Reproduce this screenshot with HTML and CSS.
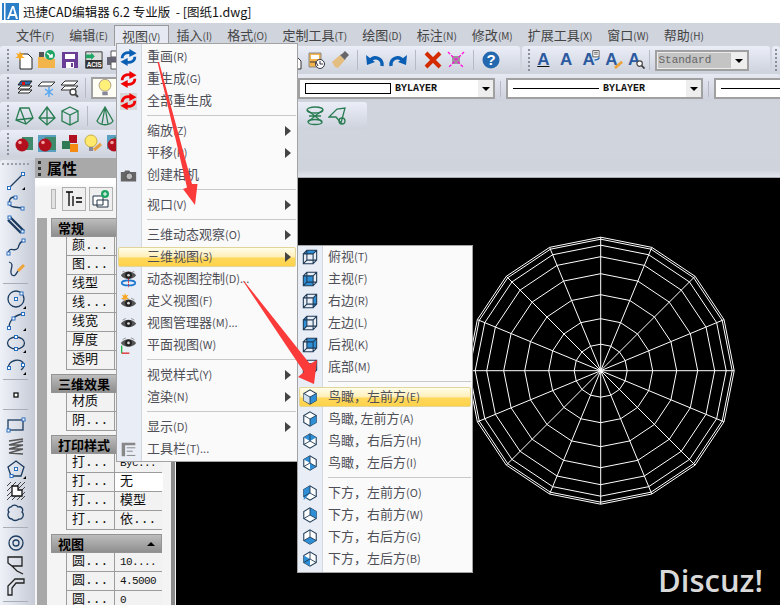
FILE: index.html
```html
<!DOCTYPE html>
<html lang="zh-CN">
<head>
<meta charset="utf-8">
<title>迅捷CAD编辑器</title>
<link rel="stylesheet" href="styles.css">
</head>
<body>
<svg class="defs" width="0" height="0">
  <defs>
    <polygon id="ring" class="ring" points="1,0 .9239,.3827 .7071,.7071 .3827,.9239 0,1 -.3827,.9239 -.7071,.7071 -.9239,.3827 -1,0 -.9239,-.3827 -.7071,-.7071 -.3827,-.9239 0,-1 .3827,-.9239 .7071,-.7071 .9239,-.3827"/>
    <symbol id="cycle" viewBox="0 0 20 20"><path fill="none" stroke="currentColor" stroke-width="3.2" d="M2.500 11C2.500 6 7 3.500 12 4.500M17.500 9C17.500 14 13 16.500 8 15.500"/><path fill="currentColor" d="M11 0 19.500 5 11 9.500ZM9 20 .5 15 9 10.500Z"/></symbol>
    <symbol id="eye" viewBox="0 0 20 14"><path fill="#555" d="M1 7C5 1 15 1 19 7 15 13 5 13 1 7Z"/><circle cx="10" cy="7" r="4" fill="#222"/><circle cx="10" cy="7" r="1.6" fill="#ddd"/><path fill="none" stroke="#888" d="M3 3 7 1M17 3l-4-2"/></symbol>
    <symbol id="cube" viewBox="0 0 18 18"><path fill="none" stroke="#1f3a55" stroke-width="1.2" d="M1.5 5.5h11v11h-11zM1.5 5.5l4-4h11v11l-4 4M12.5 5.5l4-4M5.5 1.5v11h11M1.5 16.5l4-4"/></symbol>
    <symbol id="hex" viewBox="0 0 18 18"><path fill="#fff" stroke="#1f3a55" stroke-width="1.2" d="M9 1l7 4v8l-7 4-7-4V5Z"/></symbol>
    <symbol id="arrow" viewBox="0 0 6 10"><path fill="#444" d="M0 0l6 5-6 5Z"/></symbol>
    <symbol id="dn" viewBox="0 0 8 4"><path fill="#000" d="M0 0h8L4 4Z"/></symbol>
    <symbol id="ball" viewBox="0 0 20 20"><rect x="8" y="3" width="11" height="13" fill="#3f8a6a"/><circle cx="8" cy="11" r="6.5" fill="#b3101e"/><circle cx="6" cy="8.5" r="1.8" fill="#f2a0a0"/></symbol>
  </defs>
</svg>

<header class="titlebar">
  <svg class="logo" width="17" height="17" viewBox="0 0 17 17"><rect width="17" height="17" fill="#2a7fc8"/><rect x="2" y="0" width="1.5" height="17" fill="#fff"/><path fill="#fff" d="M5 16 10 3h2l4 13h-2l-1-3H8l-1 3Zm4-5h3.5L11 5Z"/></svg>
  <span class="title-text">迅捷CAD编辑器 6.2 专业版&nbsp; - [图纸1.dwg]</span>
</header>

<nav class="menubar">
  <span class="mb-item">文件<small>(F)</small></span>
  <span class="mb-item">编辑<small>(E)</small></span>
  <span class="mb-item mb-open">视图<small>(V)</small></span>
  <span class="mb-item">插入<small>(I)</small></span>
  <span class="mb-item">格式<small>(O)</small></span>
  <span class="mb-item">定制工具<small>(T)</small></span>
  <span class="mb-item">绘图<small>(D)</small></span>
  <span class="mb-item">标注<small>(N)</small></span>
  <span class="mb-item">修改<small>(M)</small></span>
  <span class="mb-item">扩展工具<small>(X)</small></span>
  <span class="mb-item">窗口<small>(W)</small></span>
  <span class="mb-item">帮助<small>(H)</small></span>
</nav>

<section class="toolbars">
  <div class="tb-row">
    <div class="tb tb-a">
      <i class="grip"></i>
      <div class="icons">
        <svg class="ic" viewBox="0 0 20 20"><path fill="#fff" stroke="#222" d="M6 4h8l4 4v11H6Z"/><path fill="#f7a823" d="M6 1l1 3 3-1-2 3 3 2-4 0-1 3-1-3-4 0 3-2-2-3 3 1Z"/></svg>
        <svg class="ic" viewBox="0 0 20 20"><path fill="#f4b44c" d="M1 7h6l2 2h9v9H1Z"/><path fill="#555" d="M2 2h5v5H2Z"/><circle cx="13" cy="5" r="5" fill="#1fa565"/><path fill="none" stroke="#fff" stroke-width="1.6" d="M10 3l5 4m0-3v3h-3"/></svg>
        <svg class="ic" viewBox="0 0 20 20"><path fill="#6a3e96" d="M2 2h16v16H2Z"/><path fill="#fff" d="M5 4h10v5H5ZM6 12h8v6H6Z"/><path fill="#6a3e96" d="M11 13h2v4h-2Z"/></svg>
        <svg class="ic" viewBox="0 0 22 20"><path fill="#ddd" stroke="#333" d="M3 1h18v18H3Z"/><path fill="#333" d="M3 10h18v9H3Z"/><path fill="#1fa565" d="M3 4h6V2l4 4-4 4V8H3Z"/><text class="acis" x="4" y="18">ACIS</text></svg>
        <svg class="ic" viewBox="0 0 20 20"><path fill="#fff" stroke="#555" d="M5 1h10v6H5Z"/><path fill="#667" d="M1 7h18v8H1Z"/><path fill="#fff" stroke="#555" d="M5 12h10v7H5Z"/></svg>
      </div>
      <div class="icons icons-right">
        <svg class="ic" viewBox="0 0 20 20"><path fill="#f4b44c" d="M3 3h11v14H3Z"/><path fill="#fff" stroke="#333" d="M9 8h5l3 3v8H9Z"/></svg>
        <svg class="ic" viewBox="0 0 20 20"><path fill="#f4b44c" stroke="#888" d="M2 3h12v14H2Z"/><path fill="#fff" d="M4 5h8v4H4Z"/><circle cx="13" cy="14" r="4.5" fill="#fff" stroke="#334"/><path fill="none" stroke="#334" d="M3 12h6l2 4M13 11v3h3"/></svg>
        <svg class="ic" viewBox="0 0 20 20"><path fill="#e4bd80" d="M2 12l8-7 5 5-7 8-3-1Z"/><path fill="#666" d="M12 4l3-3 4 4-3 3-1 2-5-5Z"/></svg>
        <i class="vsep"></i>
        <svg class="ic" viewBox="0 0 20 20"><path fill="none" stroke="#0a5fb4" stroke-width="3.4" d="M17 16c1-8-8-11-12-5"/><path fill="#0a5fb4" d="M1 5l1 10 8-3Z"/></svg>
        <svg class="ic" viewBox="0 0 20 20"><path fill="none" stroke="#0a5fb4" stroke-width="3.4" d="M3 16c-1-8 8-11 12-5"/><path fill="#0a5fb4" d="M19 5l-1 10-8-3Z"/></svg>
        <i class="vsep"></i>
        <svg class="ic" viewBox="0 0 20 20"><path fill="none" stroke="#d42a00" stroke-width="4" d="M3 3l14 14M17 3 3 17"/></svg>
        <svg class="ic" viewBox="0 0 20 20"><path fill="#999" d="M6 6h8v8H6Z"/><path fill="none" stroke="#ff10e0" stroke-width="1.4" stroke-dasharray="3 1.5" d="M2 2l16 16M18 2 2 18"/></svg>
        <i class="vsep"></i>
        <svg class="ic" viewBox="0 0 20 20"><circle cx="10" cy="10" r="8.5" fill="#2468b0"/><text class="qm" x="10" y="15">?</text></svg>
      </div>
    </div>
    <div class="tb tb-b">
      <i class="grip"></i>
      <span class="aa aa-u">A</span>
      <span class="aa">A</span>
      <span class="aa">A<svg class="badge" viewBox="0 0 10 12"><path fill="#fff" stroke="#555" d="M2 .5h7v7H2Z"/><path stroke="#555" d="M3.500 2.500h4M3.500 4.500h4"/><path fill="none" stroke="#0a5fb4" stroke-width="1.4" d="M9 8c0 2-2 3-5 3"/></svg></span>
      <span class="aa">A<svg class="badge badge-low" viewBox="0 0 10 10"><path stroke="#eda33a" stroke-width="3" d="M1 9l8-7"/></svg></span>
      <span class="aa">A<svg class="badge badge-low" viewBox="0 0 10 10"><circle cx="4" cy="4" r="3" fill="#fff" stroke="#444" stroke-width="1.3"/><path stroke="#444" stroke-width="2" d="M6 6l3.500 3.500"/></svg></span>
      <i class="vsep"></i>
      <div class="combo combo-std"><span class="std-text">Standard</span><span class="combo-btn"><svg width="8" height="4"><use href="#dn"/></svg></span></div>
    </div>
    <div class="tb tb-c"><i class="grip"></i></div>
  </div>

  <div class="tb-row">
    <div class="tb tb-wide">
      <i class="grip"></i>
      <div class="icons">
        <svg class="ic" viewBox="0 0 20 20"><path fill="#fff" stroke="#222" d="M4 15l3-3h11l-3 3ZM4 11l3-3h11l-3 3Z"/><path fill="#2c6cb0" stroke="#222" d="M4 7l3-4h11l-3 4Z"/><rect x="8" y="4" width="3" height="3" fill="#e01010"/></svg>
        <svg class="ic" viewBox="0 0 20 20"><path fill="#fff" stroke="#333" d="M1 8l4-4h13l-4 4Z"/><path fill="none" stroke="#5aa8ef" stroke-width="1.5" d="M12 9v10M8 11l8 6M16 11l-8 6"/></svg>
        <svg class="ic" viewBox="0 0 20 20"><path fill="#fff" stroke="#333" d="M1 7l4-4h13l-4 4ZM1 12l4-4h13l-4 4Z"/><circle cx="13" cy="14" r="3" fill="#fff" stroke="#444" stroke-width="1.4"/><path stroke="#444" stroke-width="2" d="M15 16l3 3"/></svg>
        <i class="vsep vsep-tight"></i>
        <div class="combo combo-layer"><svg class="ic" viewBox="0 0 20 22"><circle cx="10" cy="8" r="6.5" fill="#fff07a" stroke="#a98"/><path fill="#889" d="M7 15h6v4H7Z"/></svg></div>
      </div>
      <div class="combos">
        <div class="combo combo-line"><span class="swatch"></span><span class="bylayer">BYLAYER</span><span class="combo-btn"><svg width="8" height="4"><use href="#dn"/></svg></span></div>
        <i class="vsep"></i>
        <div class="combo combo-line"><span class="lineprev"></span><span class="bylayer">BYLAYER</span><span class="combo-btn"><svg width="8" height="4"><use href="#dn"/></svg></span></div>
        <i class="vsep"></i>
        <div class="combo combo-line combo-last"><span class="lineprev"></span></div>
      </div>
    </div>
  </div>

  <div class="tb-row">
    <div class="tb tb-3">
      <i class="grip"></i>
      <div class="icons green">
        <svg class="ic" viewBox="0 0 20 20"><path d="M6 2h9l4 10-7 6-10-4ZM6 2l6 16M2 14 19 12"/></svg>
        <svg class="ic" viewBox="0 0 20 20"><path d="M10 1l8 11-8 7-8-7ZM10 1v18M2 12h16"/></svg>
        <svg class="ic" viewBox="0 0 20 20"><path d="M10 1l8 4v10l-8 4-8-4V5ZM2 5l8 4 8-4M10 9v10"/></svg>
        <i class="vsep"></i>
        <svg class="ic" viewBox="0 0 20 20"><path d="M10 1 2 15c3 5 13 5 16 0ZM10 1 7 18M10 1l3 17"/></svg>
      </div>
      <div class="icons icons-right green">
        <i class="vsep"></i>
        <svg class="ic" viewBox="0 0 20 20"><ellipse cx="10" cy="4" rx="8" ry="3"/><ellipse cx="10" cy="16" rx="7" ry="2.5"/><path d="M2 4l8 6 8-6M3 16l7-6 7 6M4 10h12"/></svg>
        <svg class="ic" viewBox="0 0 20 20"><path d="M1 11 9 3l8-1-4 15-5-6Zm0 0h7"/><circle cx="14" cy="15" r="3"/></svg>
      </div>
    </div>
  </div>

  <div class="tb-row">
    <div class="tb tb-4">
      <i class="grip"></i>
      <div class="icons">
        <svg class="ic"><use href="#ball"/></svg>
        <svg class="ic" viewBox="0 0 20 20"><rect x="1" y="1" width="18" height="17" fill="#5aa0c0"/><use href="#ball" width="20" height="20"/></svg>
        <svg class="ic" viewBox="0 0 20 20"><rect x="9" y="1" width="8" height="8" fill="#b01020"/><rect x="2" y="7" width="8" height="8" fill="#2f7a55"/><rect x="10" y="10" width="8" height="8" fill="#f58a10"/></svg>
        <svg class="ic" viewBox="0 0 20 20"><circle cx="8" cy="7" r="6" fill="#ffe86a" stroke="#c9b040"/><path fill="#889" d="M6 13h4v4H6Z"/><path stroke="#e8a040" stroke-width="3" d="M11 16l7-6"/></svg>
        <svg class="ic" viewBox="0 0 20 20"><rect x="1" y="1" width="14" height="14" fill="#5aa0c0"/><use href="#ball" width="20" height="20"/></svg>
      </div>
    </div>
  </div>
</section>

<main class="workspace">
  <aside class="vtools">
    <i class="hgrip"></i>
    <svg class="vic" viewBox="0 0 20 20"><path d="M3 17 17 3"/><rect class="n" x="1.5" y="15.5" width="3" height="3"/><rect class="n" x="15.5" y="1.5" width="3" height="3"/><path class="t" d="M19 16v3h-3Z"/></svg>
    <svg class="vic" viewBox="0 0 20 20"><path d="M9 4C2 4 1 13 8 14l8 1"/><rect class="n" x="8" y="3" width="3" height="3"/><rect class="n" x="2" y="9" width="3" height="3"/><rect class="n" x="15" y="14" width="3" height="3"/></svg>
    <svg class="vic" viewBox="0 0 20 20"><path class="thick" d="M4 2 18 16M2 5 15 18"/><rect class="n" x="2" y="1" width="3" height="3"/><rect class="n" x="15" y="15" width="3" height="3"/></svg>
    <svg class="vic" viewBox="0 0 20 20"><path d="M2 17C3 8 9 16 12 11 13 7 15 4 18 4"/><rect class="n" x="1" y="15" width="3" height="3"/><rect class="n" x="16" y="2" width="3" height="3"/></svg>
    <svg class="vic" viewBox="0 0 20 20"><path d="M3 3C10 5 2 12 6 16 10 19 11 11 14 10"/><path class="pen" d="M12 12l6-6"/></svg>
    <i class="hsep"></i>
    <svg class="vic" viewBox="0 0 20 20"><circle cx="10" cy="10" r="8"/><rect class="n" x="8.5" y="8.5" width="3" height="3"/><rect class="n" x="14" y="3" width="3" height="3"/><path class="t" d="M20 17v3h-3Z"/></svg>
    <svg class="vic" viewBox="0 0 20 20"><path d="M3 17C3 9 9 4 17 3"/><rect class="n" x="1.5" y="15.5" width="3" height="3"/><rect class="n" x="15.5" y="1.5" width="3" height="3"/><rect class="n" x="6" y="6" width="3" height="3"/><path class="t" d="M20 17v3h-3Z"/></svg>
    <svg class="vic" viewBox="0 0 20 20"><ellipse cx="10" cy="10" rx="8.5" ry="6"/><rect class="n" x="8.5" y="2.5" width="3" height="3"/><rect class="n" x="8.5" y="14.5" width="3" height="3"/><path class="t" d="M20 17v3h-3Z"/></svg>
    <svg class="vic" viewBox="0 0 20 20"><path d="M3 13C0 6 16 1 18 10c0 3-2 4-3 5"/><rect class="n" x="1.5" y="11.5" width="3" height="3"/><rect class="n" x="15.5" y="8.5" width="3" height="3"/><path class="t" d="M20 17v3h-3Z"/></svg>
    <i class="hsep"></i>
    <svg class="vic" viewBox="0 0 20 20"><rect class="pt" x="8" y="8" width="4" height="4"/></svg>
    <i class="hsep"></i>
    <svg class="vic" viewBox="0 0 20 20"><rect x="2" y="5" width="15" height="10"/><rect class="n" x="16" y="3" width="3" height="3"/><rect class="n" x="1" y="14" width="3" height="3"/></svg>
    <svg class="vic" viewBox="0 0 20 20"><path class="coil" d="M3 4 17 2M3 8 17 4M3 8 17 8M3 12 17 8M3 12 17 12M3 16 17 12M3 16 17 17"/></svg>
    <svg class="vic" viewBox="0 0 20 20"><path d="M10 2 18 8 15 17H5L2 8Z"/><rect class="n" x="8.5" y="8.5" width="3" height="3"/><rect class="n" x="4" y="15.5" width="3" height="3"/><path class="t" d="M20 17v3h-3Z"/></svg>
    <svg class="vic" viewBox="0 0 20 20"><path class="hatch" d="M1 5 5 1M1 10 10 1M1 15 15 1M1 19 19 1M6 19 19 6M11 19 19 11M15 19 19 15"/><path class="plate" d="M6 5h6v4h4v6H6Z"/></svg>
    <svg class="vic" viewBox="0 0 20 20"><path d="M5 4C7 1 11 2 12 4 15 3 18 6 16 9 19 12 16 17 13 16 11 18 7 18 6 16 2 16 1 11 3 9 1 7 3 4 5 4Z"/></svg>
    <i class="hsep"></i>
    <svg class="vic" viewBox="0 0 20 20"><circle cx="10" cy="10" r="7"/><circle cx="10" cy="10" r="3"/></svg>
    <svg class="vic" viewBox="0 0 20 20"><path class="dk" d="M2 2h14v9H6L2 8ZM6 11l5 5 6 3"/></svg>
    <svg class="vic" viewBox="0 0 20 20"><path class="dk" d="M18 2H9L2 9v9h4v-7l4-5h8Z"/></svg>
    <i class="hsep"></i>
  </aside>

  <aside class="panel">
    <div class="panel-head"><i class="vgrip"></i><span class="panel-title">属性</span></div>
    <div class="panel-body">
      <div class="panel-tools">
        <i class="ptool-grip"></i>
        <span class="ptool"><svg width="18" height="18" viewBox="0 0 18 18"><path fill="none" stroke="#000" stroke-width="1.3" d="M1 2h7M4 2v14M8 6v10M11 8h6M11 12h6"/></svg></span>
        <span class="ptool"><svg width="18" height="18" viewBox="0 0 18 18"><path fill="#fff" stroke="#234" d="M1 6h10v9H1ZM5 10h11v7H5Z"/><circle cx="13" cy="4" r="4" fill="#1fa565"/><path stroke="#fff" d="M11 4h4M13 2v4"/></svg></span>
        <span class="ptool"></span>
      </div>
      <div class="tree">
        <i class="strip"></i>
        <div class="groups">
          <section class="group">
            <h3 class="group-head">常规</h3>
            <div class="prop"><span>颜...</span><span></span></div>
            <div class="prop"><span>图...</span><span></span></div>
            <div class="prop"><span>线型</span><span></span></div>
            <div class="prop"><span>线...</span><span></span></div>
            <div class="prop"><span>线宽</span><span></span></div>
            <div class="prop"><span>厚度</span><span></span></div>
            <div class="prop"><span>透明</span><span></span></div>
          </section>
          <section class="group">
            <h3 class="group-head">三维效果</h3>
            <div class="prop"><span>材质</span><span></span></div>
            <div class="prop"><span>阴...</span><span></span></div>
          </section>
          <section class="group">
            <h3 class="group-head">打印样式</h3>
            <div class="prop"><span>打...</span><span class="num">Byc...</span></div>
            <div class="prop"><span>打...</span><span class="white">无</span></div>
            <div class="prop"><span>打...</span><span>模型</span></div>
            <div class="prop"><span>打...</span><span>依...</span></div>
          </section>
          <section class="group">
            <h3 class="group-head">视图<svg class="up" width="8" height="4" viewBox="0 0 8 4"><path d="M0 4h8L4 0Z"/></svg></h3>
            <div class="prop"><span>圆...</span><span class="num">10....</span></div>
            <div class="prop"><span>圆...</span><span class="num">4.5000</span></div>
            <div class="prop"><span>圆...</span><span class="num">0</span></div>
          </section>
        </div>
        <i class="pgap"></i>
        <i class="scroll"></i>
      </div>
    </div>
  </aside>

  <div class="drawing">
    <div class="drawing-top"></div>
    <svg class="canvas" width="604" height="427" viewBox="176 178 604 427">
      <g transform="translate(600.7 370.7)">
        <use href="#ring" transform="scale(26.5)"/>
        <use href="#ring" transform="scale(52)"/>
        <use href="#ring" transform="scale(76)"/>
        <use href="#ring" transform="scale(97)"/>
        <use href="#ring" transform="scale(114)"/>
        <use href="#ring" transform="scale(125.5)"/>
        <use href="#ring" transform="scale(131.5)"/>
        <use href="#ring" transform="scale(133.5)"/>
        <path class="spokes" d="M-133.5 0H133.5M0-133.5V133.5M-123.3-51.1 123.3 51.1M-123.3 51.1 123.3-51.1M-94.4-94.4 94.4 94.4M-94.4 94.4 94.4-94.4M-51.1-123.3 51.1 123.3M-51.1 123.3 51.1-123.3"/>
      </g>
    </svg>
  </div>
</main>

<div class="menu menu-main">
  <div class="mi"><svg class="mic blue"><use href="#cycle"/></svg><span class="ml">重画<small>(R)</small></span></div>
  <div class="mi"><svg class="mic red"><use href="#cycle"/></svg><span class="ml">重生成<small>(G)</small></span></div>
  <div class="mi"><svg class="mic red boxed"><use href="#cycle"/></svg><span class="ml">全部重生成</span></div>
  <i class="ms"></i>
  <div class="mi"><i class="mic"></i><span class="ml">缩放<small>(Z)</small></span><svg class="sub"><use href="#arrow"/></svg></div>
  <div class="mi"><i class="mic"></i><span class="ml">平移<small>(P)</small></span><svg class="sub"><use href="#arrow"/></svg></div>
  <div class="mi"><svg class="mic" viewBox="0 0 20 20"><path fill="#666" d="M1 6h4l1-2h5l1 2h7v11H1Z"/><circle cx="11" cy="11" r="4" fill="#bbb" stroke="#444"/></svg><span class="ml">创建相机</span></div>
  <i class="ms"></i>
  <div class="mi"><i class="mic"></i><span class="ml">视口<small>(V)</small></span><svg class="sub"><use href="#arrow"/></svg></div>
  <i class="ms"></i>
  <div class="mi"><i class="mic"></i><span class="ml">三维动态观察<small>(O)</small></span><svg class="sub"><use href="#arrow"/></svg></div>
  <div class="mi hl"><i class="mic"></i><span class="ml">三维视图<small>(3)</small></span><svg class="sub"><use href="#arrow"/></svg></div>
  <div class="mi"><svg class="mic" viewBox="0 0 20 20"><use href="#eye" y="-2" height="14" width="20"/><ellipse cx="10" cy="14" rx="8" ry="3" fill="none" stroke="#1f78d0" stroke-width="2"/><path stroke="#e01010" stroke-dasharray="2 1" d="M10 9v10"/></svg><span class="ml">动态视图控制<small>(D)...</small></span></div>
  <div class="mi"><svg class="mic" viewBox="0 0 20 20"><use href="#eye" y="5" height="14" width="20"/><path fill="#f7a823" d="M6 0l1 3 3-1-2 3 3 2-4 0-1 3-1-3-4 0 3-2-2-3 3 1Z"/></svg><span class="ml">定义视图<small>(F)</small></span></div>
  <div class="mi"><svg class="mic" viewBox="0 0 20 20"><use href="#eye" y="3" height="14" width="20"/></svg><span class="ml">视图管理器<small>(M)...</small></span></div>
  <div class="mi"><svg class="mic" viewBox="0 0 20 20"><use href="#eye" y="0" height="14" width="20"/><path fill="none" stroke="#10b030" stroke-width="1.4" d="M2 10v9"/><path fill="none" stroke="#e01010" stroke-width="1.4" d="M2 19h9"/></svg><span class="ml">平面视图<small>(W)</small></span></div>
  <i class="ms"></i>
  <div class="mi"><i class="mic"></i><span class="ml">视觉样式<small>(Y)</small></span><svg class="sub"><use href="#arrow"/></svg></div>
  <div class="mi"><i class="mic"></i><span class="ml">渲染<small>(N)</small></span><svg class="sub"><use href="#arrow"/></svg></div>
  <i class="ms"></i>
  <div class="mi"><i class="mic"></i><span class="ml">显示<small>(D)</small></span><svg class="sub"><use href="#arrow"/></svg></div>
  <div class="mi"><svg class="mic" viewBox="0 0 20 20"><path fill="#888" d="M2 2h16v3H2ZM2 5h4v13H2Z"/><path fill="none" stroke="#777" d="M8 8h10M8 12h7M8 17h10"/></svg><span class="ml">工具栏<small>(T)...</small></span></div>
</div>

<div class="menu menu-sub">
  <div class="mi"><svg class="mic" viewBox="0 0 18 18"><path fill="#2f8fd6" d="M1.5 5.5l4-4h11l-4 4Z"/><use href="#cube"/></svg><span class="ml">俯视<small>(T)</small></span></div>
  <div class="mi"><svg class="mic" viewBox="0 0 18 18"><path fill="#2f8fd6" d="M1.5 5.5h11v11h-11Z"/><use href="#cube"/></svg><span class="ml">主视<small>(F)</small></span></div>
  <div class="mi"><svg class="mic" viewBox="0 0 18 18"><path fill="#2f8fd6" d="M12.5 5.5l4-4v11l-4 4Z"/><use href="#cube"/></svg><span class="ml">右边<small>(R)</small></span></div>
  <div class="mi"><svg class="mic" viewBox="0 0 18 18"><path fill="#2f8fd6" d="M1.5 5.5l4-4v11l-4 4Z"/><use href="#cube"/></svg><span class="ml">左边<small>(L)</small></span></div>
  <div class="mi"><svg class="mic" viewBox="0 0 18 18"><path fill="#2f8fd6" d="M5.5 1.5h11v11h-11Z"/><use href="#cube"/></svg><span class="ml">后视<small>(K)</small></span></div>
  <div class="mi"><svg class="mic" viewBox="0 0 18 18"><path fill="#2f8fd6" d="M1.5 16.5l4-4h11l-4 4Z"/><use href="#cube"/></svg><span class="ml">底部<small>(M)</small></span></div>
  <i class="ms"></i>
  <div class="mi hl"><svg class="mic" viewBox="0 0 18 18"><use href="#hex"/><path fill="#2f8fd6" d="M9 9l7-4v8l-7 4Z"/><path fill="#cfe0ee" d="M2 5l7 4v8l-7-4Z"/><path fill="none" stroke="#1f3a55" d="M2 5l7 4 7-4M9 9v8"/></svg><span class="ml">鸟瞰，左前方<small>(E)</small></span></div>
  <div class="mi"><svg class="mic" viewBox="0 0 18 18"><use href="#hex"/><path fill="#2f8fd6" d="M9 9l7-4v8l-7 4Z"/><path fill="none" stroke="#1f3a55" d="M2 5l7 4 7-4M9 9v8"/></svg><span class="ml">鸟瞰, 左前方<small>(A)</small></span></div>
  <div class="mi"><svg class="mic" viewBox="0 0 18 18"><use href="#hex"/><path fill="#2f8fd6" d="M9 9l7-4-7-4-7 4Z"/><path fill="none" stroke="#1f3a55" d="M2 13l7-4 7 4M9 1v8"/></svg><span class="ml">鸟瞰，右后方<small>(H)</small></span></div>
  <div class="mi"><svg class="mic" viewBox="0 0 18 18"><use href="#hex"/><path fill="#2f8fd6" d="M9 9 2 5l7-4Z"/><path fill="#2f8fd6" d="M9 9l7 4-7 4Z"/><path fill="none" stroke="#1f3a55" d="M2 13l7-4 7 4M9 1v8"/></svg><span class="ml">鸟瞰，左后方<small>(I)</small></span></div>
  <i class="ms"></i>
  <div class="mi"><svg class="mic" viewBox="0 0 18 18"><use href="#hex"/><path fill="#2f8fd6" d="M2 5l7-4v8l-7 8Z"/><path fill="none" stroke="#1f3a55" d="M9 1v8l7 4M9 9l-7 4"/></svg><span class="ml">下方，左前方<small>(O)</small></span></div>
  <div class="mi"><svg class="mic" viewBox="0 0 18 18"><use href="#hex"/><path fill="#2f8fd6" d="M9 1l7 4v8l-7-4Z"/><path fill="none" stroke="#1f3a55" d="M9 1v8l7 4M9 9l-7 4"/></svg><span class="ml">下方，右前方<small>(W)</small></span></div>
  <div class="mi"><svg class="mic" viewBox="0 0 18 18"><use href="#hex"/><path fill="#2f8fd6" d="M9 9l7 4-7 4-7-4Z"/><path fill="none" stroke="#1f3a55" d="M9 1v8l7 4M9 9l-7 4"/></svg><span class="ml">下方，右后方<small>(G)</small></span></div>
  <div class="mi"><svg class="mic" viewBox="0 0 18 18"><use href="#hex"/><path fill="#2f8fd6" d="M2 5l7 4v8l-7-4Z"/><path fill="none" stroke="#1f3a55" d="M9 1v8l7 4M9 9l-7 4"/></svg><span class="ml">下方，左后方<small>(B)</small></span></div>
</div>

<svg class="arrows" width="780" height="605" viewBox="0 0 780 605">
  <path d="M157.5 62 159 62 192 184 197.500 184 195 205 183 189 187 187.500Z"/>
  <path d="M243 281 244 281 310 364 317 360 314 384 298 377 304 372Z"/>
</svg>

<div class="watermark">Discuz!</div>
</body>
</html>
```

FILE: styles.css
```css
* { box-sizing: border-box; }
html, body { margin: 0; padding: 0; }
body {
  position: relative;
  width: 780px;
  height: 605px;
  overflow: hidden;
  background: #d0d4dd;
  font-family: "Noto Sans CJK SC", "Liberation Sans", sans-serif;
  color: #222;
}
i { display: block; }
.defs { position: absolute; }
.ring { fill: none; stroke: #fff; stroke-width: 1; vector-effect: non-scaling-stroke; }
.spokes { fill: none; stroke: #fff; stroke-width: 1; }

/* title bar */
.titlebar {
  height: 23px;
  background: #fff;
  display: flex;
  align-items: center;
  padding-left: 2px;
  gap: 4px;
}
.logo { flex: none; }
.title-text { font-size: 12.5px; line-height: 23px; color: #111; white-space: nowrap; }

/* menu bar */
.menubar {
  height: 23px;
  display: flex;
  align-items: center;
  padding-left: 8px;
  background: #d0d4dd;
  font-size: 13px;
  color: #444;
}
.mb-item {
  padding: 0 7px;
  white-space: nowrap;
  height: 21px;
  line-height: 19px;
  border: 1px solid transparent;
  border-bottom: 0;
  margin-right: -1px;
}
.mb-item small { font-size: 10px; }
.mb-open { background: #e6e9f1; border-color: #9a9a9a; margin: 1px 0 0 -1px; }

/* toolbars */
.toolbars { height: 112px; }
.tb-row { display: flex; height: 28px; gap: 2px; }
.tb {
  display: flex;
  align-items: center;
  height: 27px;
  border-radius: 3px;
  background: linear-gradient(#ebeef7, #cdd2dd);
  padding-left: 7px;
}
.tb-a { width: 520px; }
.tb-b { width: 248px; padding-left: 6px; }
.tb-c { flex: 1; min-width: 0; padding-left: 3px; }
.tb-wide { width: 780px; background: linear-gradient(#e6e9f2, #cdd1dc); }
.tb-3 { width: 367px; }
.tb-4 { width: 220px; }
.grip { width: 2px; height: 22px; flex: none; border-left: 2px dotted #8b8f99; }
.icons { display: flex; align-items: center; gap: 3px; padding-left: 5px; }
.icons-right { margin-left: auto; padding-left: 0; padding-right: 19px; }
.ic { width: 20px; height: 20px; flex: none; display: block; }
.vsep { width: 1px; height: 20px; background: #b6bac4; margin: 0 4px; flex: none; }
.vsep-tight { margin: 0 2px; }
.acis { font: bold 7px "Liberation Sans", sans-serif; fill: #fff; }
.qm { font: bold 15px "Liberation Sans", sans-serif; fill: #fff; text-anchor: middle; }
.green .ic { fill: none; stroke: #2a7d52; stroke-width: 1.3; }
.aa {
  position: relative;
  width: 22.7px;
  text-align: center;
  font: bold 17px/24px "Liberation Sans", sans-serif;
  color: #2c5aa0;
  flex: none;
}
.tb-b .aa:first-of-type { margin-left: 2px; }
.aa-u { text-decoration: underline; text-decoration-color: #111; }
.badge { position: absolute; right: 0; top: 2px; width: 9px; height: 11px; }
.badge-low { top: 12px; height: 9px; }
.combo {
  display: flex;
  align-items: center;
  border: 2px solid #a0a0a0;
  background: #fff;
  height: 21px;
  flex: none;
  margin-top: 2px;
}
.combo-std { width: 94px; background: #ececec; padding: 1px; margin-left: 1px; }
.std-text {
  flex: 1;
  height: 15px;
  background: #c4c4c4;
  font: 11px/15px "Liberation Mono", monospace;
  color: #666;
}
.combo-btn { width: 15px; display: flex; align-items: center; justify-content: center; align-self: stretch; background: #eeeeee; margin-left: auto; }
.combo-layer { width: 130px; height: 22px; padding: 0 2px; background: #fffef4; margin-top: 0; }
.combos { display: flex; align-items: center; margin-left: auto; }
.combo-line { width: 197px; padding-left: 5px; }
.combo-last { width: 66px; border-right: 0; padding-left: 5px; }
.combo-last .lineprev { flex: 1; width: auto; }
.combos .vsep { margin: 2px 5px 0; height: 16px; }
.swatch { width: 86px; height: 11px; border: 1px solid #000; flex: none; }
.lineprev { width: 86px; height: 1px; background: #000; flex: none; }
.bylayer { font: bold 10px "Liberation Mono", monospace; color: #111; padding-left: 4px; }

/* workspace */
.workspace { display: flex; height: 447px; }
.vtools {
  width: 35px;
  flex: none;
  margin-top: 2px;
  padding-right: 4px;
  display: flex;
  flex-direction: column;
  align-items: center;
  overflow: hidden;
  background: linear-gradient(90deg, #eef1f8, #c6cbd6);
  border-radius: 3px 0 0 0;
}
.hgrip { width: 27px; height: 7px; border-top: 2px dotted #9a9ea8; margin-top: 3px; flex: none; }
.vic { width: 22px; height: 22px; flex: none; padding: 1px; fill: none; stroke: #1c3b5e; stroke-width: 1.3; display: block; }
.vic .n { fill: #fff; stroke: #2a6fc0; stroke-width: 1; }
.vic .t { fill: #000; stroke: none; }
.vic .thick { stroke-width: 2.4; }
.vic .pen { stroke: #eda33a; stroke-width: 3; }
.vic .pt { fill: #fff; stroke: #111; }
.vic .coil { stroke: #555; stroke-width: 1.6; }
.vic .hatch { stroke: #444; stroke-width: 1; }
.vic .plate { fill: #fff; stroke: #111; }
.vic .dk { stroke: #222; }
.hsep { width: 25px; height: 8px; flex: none; }
.hsep::after { content: ""; display: block; margin-top: 3px; height: 1px; background: #a9adb6; }

/* properties panel */
.panel { width: 141px; flex: none; display: flex; flex-direction: column; }
.panel-head {
  height: 20px;
  flex: none;
  display: flex;
  align-items: center;
  padding-left: 3px;
  background: #a9a9a9;
}
.vgrip { width: 3px; height: 15px; border-left: 3px dotted #333; flex: none; }
.panel-title { font-size: 15px; font-weight: 700; color: #000; padding-left: 6px; line-height: 20px; }
.panel-body { flex: 1; background: linear-gradient(#fff 6px, #f4f4f4 10px); min-height: 0; overflow: hidden; }
.panel-tools { display: flex; gap: 3px; padding: 9px 0 0 16px; height: 40px; }
.ptool-grip { width: 5px; height: 20px; margin: 2px 3px 0 0; background: #e2e2e2; border: 1px solid #b5b5b5; }
.ptool { width: 24px; height: 24px; background: #efefef; border: 1px solid #b0b0b0; display: flex; align-items: center; justify-content: center; flex: none; }
.tree { display: flex; height: 387px; overflow: hidden; }
.strip { width: 10px; margin-left: 2px; margin-right: 4px; background: #a8a8a8; flex: none; }
.groups { width: 111px; flex: none; display: flex; flex-direction: column; gap: 4px; }
.group { display: block; }
.group-head {
  margin: 0;
  height: 19px;
  padding: 0 6px;
  display: flex;
  align-items: center;
  justify-content: space-between;
  font-size: 13px;
  line-height: 17px;
  font-weight: 700;
  color: #000;
  background: linear-gradient(#bdbdbd, #8f8f8f);
  border: 1px solid #949494;
}
.prop {
  display: grid;
  grid-template-columns: 47px 48px;
  margin-left: 15px;
  height: 19px;
  border: 1px solid #9c9c9c;
  border-top: 0;
  background: #9c9c9c;
  gap: 1px;
  font: 13px/18px "Liberation Mono", "Noto Sans CJK SC", monospace;
  color: #111;
}
.prop span { background: #f2f2f2; padding-left: 5px; white-space: nowrap; overflow: hidden; }
.prop .white { background: #fff; }
.prop .num { font-size: 11px; letter-spacing: -.6px; }
.pgap { width: 9px; flex: none; }
.scroll { width: 4px; background: #8a8a8a; flex: none; }

/* drawing */
.drawing { flex: 1; min-width: 0; }
.drawing-top { height: 20px; background: linear-gradient(#cfd3dc 60%, #e2e5ec 95%, #a8abb2 95%); }
.canvas { display: block; background: #000; }

/* menus */
.menu {
  position: absolute;
  background: linear-gradient(90deg, #e8edf6 24px, #d3d7df 24px, #d3d7df 25px, #fafafa 25px);
  border: 1px solid #a3a3a3;
  font-size: 13px;
  color: #4f4f58;
}
.menu-main { left: 116px; top: 43px; width: 182px; height: 419px; padding: 2px 0 1px; }
.menu-sub { left: 297px; top: 245px; width: 176px; height: 328px; padding: 0 0 2px; }
.mi { height: 22px; display: flex; align-items: center; white-space: nowrap; }
.mic { width: 17px; height: 17px; margin-left: 3px; flex: none; display: block; }
.menu-sub .mic { width: 16px; height: 16px; margin-left: 4px; }
.blue { color: #0a5fb4; }
.red { color: #f00000; }
.boxed { background: #d8d8d8; }
.ml { padding: 0 0 2px 10px; line-height: 20px; }
.ml small { font-size: 11px; }
.sub { width: 6px; height: 10px; margin-left: auto; margin-right: 6px; flex: none; }
.ms { height: 8px; margin-left: 30px; margin-right: 1px; padding-top: 3px; }
.ms::after { content: ""; display: block; height: 1px; background: #c9c9c9; }
.hl {
  height: 20px;
  margin: 1px;
  border: 1px solid #e2d59a;
  border-radius: 2px;
  background: linear-gradient(#fffdea, #ffefb8 50%, #ffd85c 55%, #ffd24a);
}
.hl .mic { margin-left: 1px; }
.menu-sub .hl .mic { margin-left: 2px; }
.hl .sub { margin-right: 4px; }

/* overlays */
.arrows { position: absolute; left: 0; top: 0; pointer-events: none; }
.arrows path { fill: #fb3a3a; }
.watermark {
  position: absolute;
  right: 17px;
  bottom: 7px;
  font: 600 31px/36px "Open Sans", "Liberation Sans", sans-serif;
  color: #d9d9d9;
}
```
